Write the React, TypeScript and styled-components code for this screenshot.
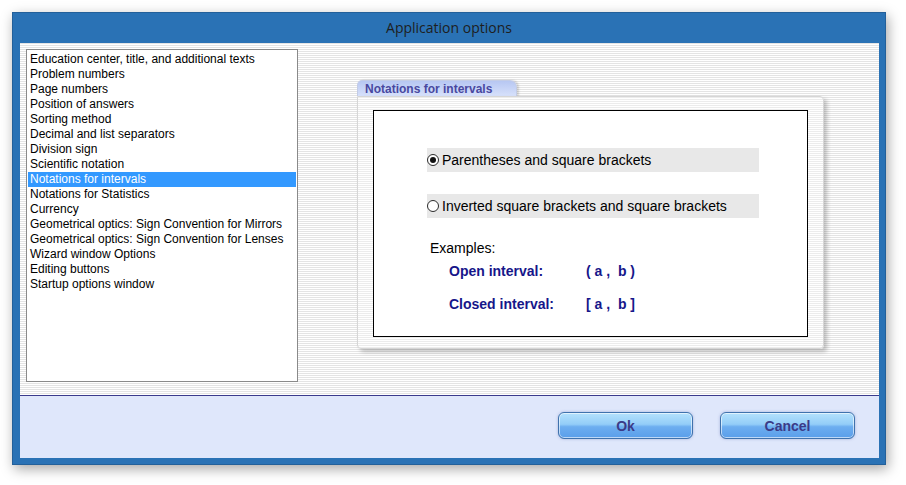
import React from 'react'
import styled, { createGlobalStyle } from 'styled-components'

const Global = createGlobalStyle`
  html, body {
    margin: 0;
    padding: 0;
    background: #ffffff;
  }
  body {
    font-family: "Liberation Sans", Arial, sans-serif;
  }
`

const Page = styled.div`
  width: 906px;
  height: 485px;
  padding: 12px 0 0 12px;
  box-sizing: border-box;
`

const Window = styled.div`
  width: 874px;
  height: 453px;
  background: #2a72b5;
  border: 1px solid #23609a;
  box-sizing: border-box;
  display: flex;
  flex-direction: column;
  box-shadow: 2px 4px 12px rgba(0, 0, 0, 0.35);
`

const TitleBar = styled.div`
  height: 30px;
  display: flex;
  align-items: center;
  justify-content: center;
  font-family: "Open Sans", "Liberation Sans", sans-serif;
  font-size: 14px;
  color: #1e1e1e;
  padding-bottom: 2px;
  box-sizing: border-box;
`

const Client = styled.div`
  flex: 1;
  margin: 0 6px 6px 7px;
  display: flex;
  flex-direction: column;
`

const Main = styled.div`
  height: 352px;
  display: flex;
  align-items: flex-start;
  background: repeating-linear-gradient(
    to bottom,
    #e4e4e4 0px,
    #e4e4e4 1px,
    #ffffff 1px,
    #ffffff 2px
  );
  border-bottom: 1px solid #3a3a8c;
`

const List = styled.ul`
  list-style: none;
  margin: 6px 0 0 6px;
  padding: 2px 1px 1px;
  width: 272px;
  height: 333px;
  box-sizing: border-box;
  background: #ffffff;
  border: 1px solid #8a8a8a;
  font-size: 12px;
  color: #000;
`

const Item = styled.li<{ $active?: boolean }>`
  height: 15px;
  line-height: 15px;
  padding-left: 2px;
  white-space: nowrap;
  background: ${p => (p.$active ? '#3399ff' : 'transparent')};
  color: ${p => (p.$active ? '#ffffff' : '#000000')};
`

const Group = styled.div`
  margin: 37px 0 0 59px;
  display: flex;
  flex-direction: column;
  align-items: flex-start;
`

const Tab = styled.div`
  height: 16px;
  padding: 0 12px 0 7px;
  display: flex;
  align-items: center;
  font-size: 12px;
  font-weight: bold;
  color: #4848a0;
  background: linear-gradient(to bottom, #b7c7f2 0%, #d7e1fb 100%);
  border: 1px solid #c3cce6;
  border-bottom: none;
  border-radius: 5px 7px 0 0;
  box-sizing: border-box;
  width: 160px;
  box-shadow: 2px 0 2px rgba(0, 0, 0, 0.15);
`

const Panel = styled.div`
  width: 467px;
  height: 253px;
  box-sizing: border-box;
  padding: 13px 0 0 15px;
  border: 1px solid #d6d6d6;
  border-radius: 0 4px 4px 4px;
  background: repeating-linear-gradient(
    to bottom,
    #ececec 0px,
    #ececec 1px,
    #ffffff 1px,
    #ffffff 2px
  );
  box-shadow: 3px 3px 4px rgba(0, 0, 0, 0.22);
`

const Inner = styled.div`
  width: 435px;
  height: 227px;
  box-sizing: border-box;
  background: #ffffff;
  border: 1px solid #000000;
  padding: 37px 0 0 53px;
  display: flex;
  flex-direction: column;
`

const RadioRow = styled.label`
  width: 332px;
  height: 24px;
  background: #e8e8e8;
  display: flex;
  align-items: center;
  gap: 3px;
  padding-left: 0;
  box-sizing: border-box;
  font-size: 14px;
  color: #000;
  margin-bottom: 22px;
`

const Radio = styled.span<{ $on?: boolean }>`
  width: 12px;
  height: 12px;
  border-radius: 50%;
  border: 1px solid #2b2b2b;
  background: #fff;
  box-sizing: border-box;
  display: flex;
  align-items: center;
  justify-content: center;
  &::after {
    content: '';
    width: 6px;
    height: 6px;
    border-radius: 50%;
    background: ${p => (p.$on ? '#111' : 'transparent')};
  }
`

const Examples = styled.div`
  font-size: 14px;
  line-height: 16px;
  color: #000;
  margin: 0 0 0 3px;
`

const ExampleRow = styled.div`
  display: flex;
  margin: -2px 0 0 22px;
  height: 33px;
  align-items: center;
  font-size: 14px;
  font-weight: bold;
  color: #16168a;
  & + & {
    margin-top: 0;
  }
`

const ExampleLabel = styled.span`
  width: 137px;
`

const Footer = styled.div`
  flex: 1;
  background: #dfe7fb;
  display: flex;
  justify-content: flex-end;
  align-items: flex-start;
  padding: 16px 24px 0 0;
  gap: 27px;
`

const Button = styled.button`
  width: 135px;
  height: 27px;
  border: 1px solid #3f72ad;
  border-radius: 6px;
  background: linear-gradient(
    to bottom,
    #b4e2fd 0%,
    #93cdf8 45%,
    #6daef0 55%,
    #5a9eea 100%
  );
  box-shadow: inset 0 0 0 1px rgba(255, 255, 255, 0.6), 0 0 3px rgba(60, 80, 160, 0.35);
  font-family: "Liberation Sans", Arial, sans-serif;
  font-size: 14px;
  font-weight: bold;
  color: #3b3b88;
  padding: 0;
`

const items = [
  'Education center, title, and additional texts',
  'Problem numbers',
  'Page numbers',
  'Position of answers',
  'Sorting method',
  'Decimal and list separators',
  'Division sign',
  'Scientific notation',
  'Notations for intervals',
  'Notations for Statistics',
  'Currency',
  'Geometrical optics: Sign Convention for Mirrors',
  'Geometrical optics: Sign Convention for Lenses',
  'Wizard window Options',
  'Editing buttons',
  'Startup options window',
]

export default function App() {
  return (
    <>
      <Global />
      <Page>
        <Window>
          <TitleBar>Application options</TitleBar>
          <Client>
            <Main>
              <List>
                {items.map(it => (
                  <Item key={it} $active={it === 'Notations for intervals'}>
                    {it}
                  </Item>
                ))}
              </List>
              <Group>
                <Tab>Notations for intervals</Tab>
                <Panel>
                  <Inner>
                    <RadioRow>
                      <Radio $on />
                      Parentheses and square brackets
                    </RadioRow>
                    <RadioRow>
                      <Radio />
                      Inverted square brackets and square brackets
                    </RadioRow>
                    <Examples>Examples:</Examples>
                    <ExampleRow>
                      <ExampleLabel>Open interval:</ExampleLabel>
                      <span>( a ,&nbsp; b )</span>
                    </ExampleRow>
                    <ExampleRow>
                      <ExampleLabel>Closed interval:</ExampleLabel>
                      <span>[ a ,&nbsp; b ]</span>
                    </ExampleRow>
                  </Inner>
                </Panel>
              </Group>
            </Main>
            <Footer>
              <Button>Ok</Button>
              <Button>Cancel</Button>
            </Footer>
          </Client>
        </Window>
      </Page>
    </>
  )
}
